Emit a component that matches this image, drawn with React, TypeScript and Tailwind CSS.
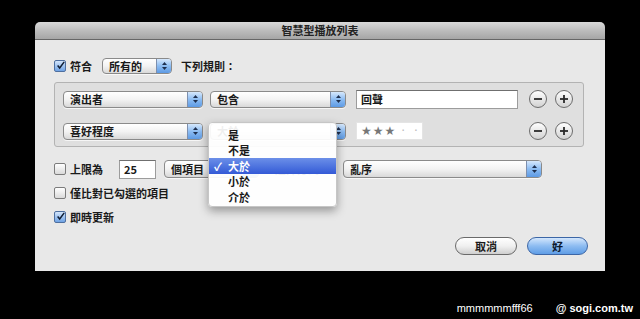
import React from 'react';

const cjk = "font-['Noto_Sans_CJK_TC','Noto_Sans_CJK_SC',sans-serif]";

function Arrows() {
  return (
    <svg width="7" height="10" viewBox="0 0 7 10">
      <path d="M3.5 1 L6 4 H1 Z" fill="#1d2f4f" />
      <path d="M3.5 9 L6 6 H1 Z" fill="#1d2f4f" />
    </svg>
  );
}

function Popup({ label, width, height = 17, arrows = true }: { label: string; width: string; height?: number; arrows?: boolean }) {
  return (
    <div
      className={`${width} flex items-stretch rounded-[4px] border border-[#8a8a8a] bg-gradient-to-b from-white via-[#f3f3f3] to-[#d9d9d9] shadow-[0_1px_0_rgba(255,255,255,0.7)]`}
      style={{ height }}
    >
      <span className="flex-1 pl-[6px] flex items-center text-[11px] font-bold text-[#1a1a1a] leading-none">{label}</span>
      {arrows && (
        <span className="w-[15px] flex items-center justify-center rounded-r-[3px] border-l border-[#7d8fae] bg-gradient-to-b from-[#d6e8fc] via-[#8cbcf2] to-[#5d9ae4]">
          <Arrows />
        </span>
      )}
    </div>
  );
}

function Checkbox({ checked }: { checked?: boolean }) {
  if (checked) {
    return (
      <span className="w-[12px] h-[12px] rounded-[2px] border border-[#4e6f9f] bg-gradient-to-b from-[#d3e5fb] to-[#6ea2e4] flex items-center justify-center">
        <svg width="11" height="11" viewBox="0 0 11 11" className="-mt-[2px] ml-[1px]">
          <path d="M2 5.5 L4.5 8.5 L10 1" stroke="#0f1d33" strokeWidth="1.8" fill="none" />
        </svg>
      </span>
    );
  }
  return <span className="w-[12px] h-[12px] rounded-[2px] border border-[#7c7c7c] bg-gradient-to-b from-white to-[#dadada]" />;
}

function RoundButton({ plus }: { plus?: boolean }) {
  return (
    <span className="w-[18px] h-[18px] rounded-full border border-[#6c6c6c] bg-gradient-to-b from-white to-[#d2d2d2] flex items-center justify-center">
      <svg width="10" height="10" viewBox="0 0 10 10">
        <path d="M1 5 H9" stroke="#2a2a2a" strokeWidth="1.8" />
        {plus && <path d="M5 1 V9" stroke="#2a2a2a" strokeWidth="1.8" />}
      </svg>
    </span>
  );
}

function TextField({ value, width }: { value: string; width: string }) {
  return (
    <div className={`${width} h-[19px] bg-white border border-[#9c9c9c] border-t-[#6f6f6f] pl-[4px] flex items-center text-[11px] font-bold text-[#1a1a1a]`}>
      {value}
    </div>
  );
}

const MENU_ITEMS = ['是', '不是', '大於', '小於', '介於'];

export default function App() {
  return (
    <div className={`w-[640px] h-[319px] bg-black overflow-hidden flex flex-col ${cjk}`}>
      <div className="ml-[35px] mt-[22px] w-[570px] h-[249px] flex flex-col relative rounded-t-[5px] overflow-visible">
        {/* Title bar */}
        <div className="h-[18px] rounded-t-[5px] bg-gradient-to-b from-[#d9d9d9] via-[#bdbdbd] to-[#a6a6a6] border-b border-[#676767] flex items-center justify-center text-[11px] font-bold text-[#222]">
          智慧型播放列表
        </div>

        {/* Body */}
        <div className="flex-1 bg-[#e8e8e8] pl-[19px] pr-[17px] pt-[18px] flex flex-col">
          <div className="h-[16px] flex items-center">
            <Checkbox checked />
            <span className="ml-[4px] text-[11px] font-bold text-[#1a1a1a]">符合</span>
            <div className="ml-[10px]">
              <Popup label="所有的" width="w-[70px]" height={16} />
            </div>
            <span className="ml-[9px] text-[11px] font-bold text-[#1a1a1a]">下列規則：</span>
          </div>

          {/* Rule box */}
          <div className="mt-[8px] mr-[4px] h-[65px] rounded-[3px] border border-[#b3b3b3] bg-[#dfdfdf] pl-[8px] pr-[10px] pt-[7px] flex flex-col gap-[14px]">
            <div className="h-[18px] flex items-center">
              <Popup label="演出者" width="w-[140px]" />
              <div className="ml-[7px]">
                <Popup label="包含" width="w-[136px]" />
              </div>
              <div className="ml-[10px]">
                <TextField value="回聲" width="w-[162px]" />
              </div>
              <div className="ml-auto flex gap-[8px]">
                <RoundButton />
                <RoundButton plus />
              </div>
            </div>
            <div className="h-[18px] flex items-center">
              <Popup label="喜好程度" width="w-[140px]" />
              <div className="ml-[7px]">
                <Popup label="大於" width="w-[136px]" />
              </div>
              <div className="ml-[10px] w-[67px] h-[18px] bg-white border border-[#e4e4e4] flex items-center pl-[4px] text-[12px] tracking-[1px] font-['DejaVu_Sans',sans-serif]">
                <span className="text-[#777]">★★★</span>
                <span className="text-[#bbb] ml-[5px]">·</span>
                <span className="text-[#bbb] ml-[8px]">·</span>
              </div>
              <div className="ml-auto flex gap-[8px]">
                <RoundButton />
                <RoundButton plus />
              </div>
            </div>
          </div>

          {/* Limit row */}
          <div className="mt-[12px] h-[20px] flex items-center">
            <Checkbox />
            <span className="ml-[4px] w-[33px] text-[11px] font-bold text-[#1a1a1a]">上限為</span>
            <div className="ml-[16px]">
              <TextField value="25" width="w-[37px]" />
            </div>
            <div className="ml-[8px]">
              <Popup label="個項目" width="w-[95px]" height={18} />
            </div>
            <span className="ml-[16px] w-[44px] text-[11px] font-bold text-[#1a1a1a] whitespace-nowrap">選擇方式</span>
            <div className="ml-[24px]">
              <Popup label="亂序" width="w-[199px]" height={18} />
            </div>
          </div>

          <div className="mt-[4px] h-[20px] flex items-center">
            <Checkbox />
            <span className="ml-[4px] text-[11px] font-bold text-[#1a1a1a]">僅比對已勾選的項目</span>
          </div>

          <div className="mt-[4px] h-[20px] flex items-center">
            <Checkbox checked />
            <span className="ml-[4px] text-[11px] font-bold text-[#1a1a1a]">即時更新</span>
          </div>

          {/* Buttons */}
          <div className="mt-[10px] h-[18px] flex justify-end gap-[10px]">
            <button className="w-[62px] h-[18px] rounded-full border border-[#6a6a6a] bg-gradient-to-b from-white via-[#f0f0f0] to-[#cfcfcf] text-[11px] font-bold text-[#1a1a1a] leading-none">
              取消
            </button>
            <button className="w-[61px] h-[18px] rounded-full border border-[#3c66a6] bg-gradient-to-b from-[#d3e6fc] via-[#8dbcf1] to-[#5f9de6] text-[11px] font-bold text-[#0d1a2e] leading-none">
              好
            </button>
          </div>
        </div>

        {/* Open pop-up menu */}
        <div className="absolute left-[173px] top-[100px] w-[129px] h-[85px] rounded-[4px] bg-white/[0.93] border border-[#c6c6c6] shadow-[0_4px_10px_rgba(0,0,0,0.35)] pt-[4px] flex flex-col">
          {MENU_ITEMS.map((item) => {
            const on = item === '大於';
            return (
              <div
                key={item}
                className={`h-[15.5px] flex items-center text-[11px] font-bold ${on ? 'bg-gradient-to-b from-[#6c8fe8] to-[#3459d6] text-white' : 'text-[#1a1a1a]'}`}
              >
                <span className="w-[19px] pl-[5px] text-[11px]">{on ? '✓' : ''}</span>
                {item}
              </div>
            );
          })}
        </div>
      </div>

      {/* Watermark */}
      <div className="mt-[30px] pr-[7px] flex justify-end items-center gap-[23px] font-['Liberation_Sans',sans-serif] text-[11px] text-white leading-[14px]">
        <span>mmmmmmfff66</span>
        <span className="font-bold">@ sogi.com.tw</span>
      </div>
    </div>
  );
}
